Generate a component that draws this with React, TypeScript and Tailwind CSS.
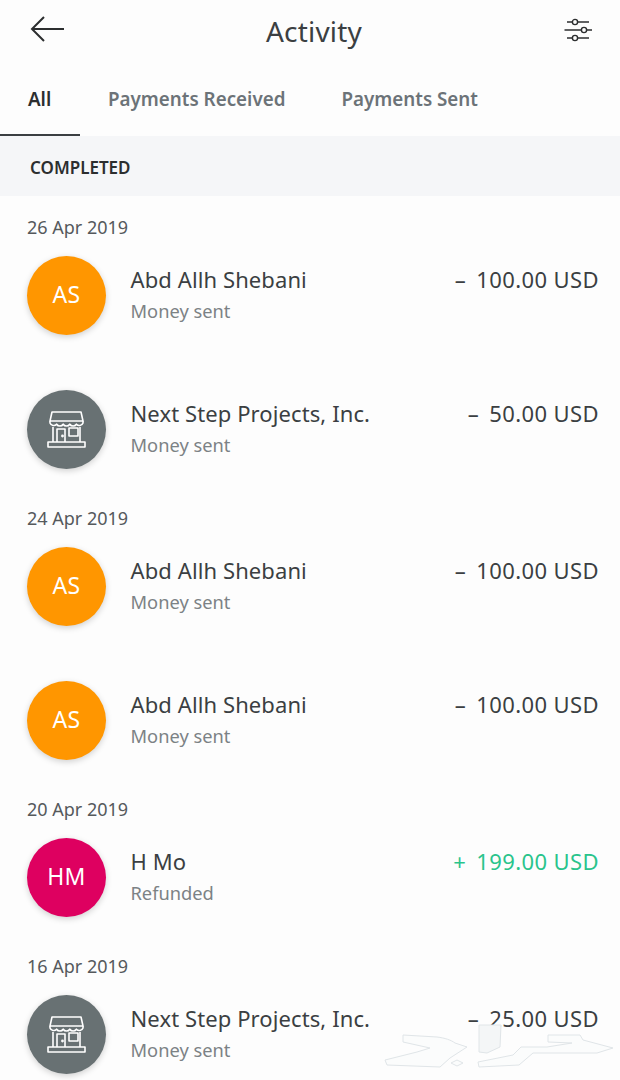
import React from 'react';

interface Payment {
  name: string;
  note: string;
  amount: string;
  avatar: 'AS' | 'HM' | 'store';
}

interface Day {
  date: string;
  items: Payment[];
}

const abd: Payment = { name: 'Abd Allh Shebani', note: 'Money sent', amount: '100.00 USD', avatar: 'AS' };

const days: Day[] = [
  {
    date: '26 Apr 2019',
    items: [abd, { name: 'Next Step Projects, Inc.', note: 'Money sent', amount: '50.00 USD', avatar: 'store' }],
  },
  { date: '24 Apr 2019', items: [abd, abd] },
  { date: '20 Apr 2019', items: [{ name: 'H Mo', note: 'Refunded', amount: '199.00 USD', avatar: 'HM' }] },
  {
    date: '16 Apr 2019',
    items: [{ name: 'Next Step Projects, Inc.', note: 'Money sent', amount: '25.00 USD', avatar: 'store' }],
  },
];

const StoreIcon = () => (
  <svg width="79" height="79" viewBox="0 0 79 79" fill="none" stroke="white" strokeWidth="1.6" strokeLinejoin="round">
    <path d="M25 22h29l2 9H23z" />
    <path d="M23 31v2a3.9 3.9 0 0 0 6.6 1.2a3.9 3.9 0 0 0 6.6 0a3.9 3.9 0 0 0 6.6 0a3.9 3.9 0 0 0 6.6 0a3.9 3.9 0 0 0 6.6 -1.2v-2" />
    <path d="M26 37v15M53 37v15" />
    <rect x="21" y="52" width="37" height="5" />
    <path d="M30 52V39h8v13" />
    <rect x="42" y="38" width="9" height="8" />
    <circle cx="35.5" cy="46" r="0.6" fill="white" />
  </svg>
);

const Avatar = ({ kind }: { kind: Payment['avatar'] }) => {
  if (kind === 'store') {
    return (
      <div className="w-[79px] h-[79px] shrink-0 rounded-full bg-[#687173] shadow-[0_2px_6px_rgba(0,0,0,0.18)]">
        <StoreIcon />
      </div>
    );
  }
  return (
    <div
      className={`w-[79px] h-[79px] shrink-0 rounded-full flex items-center justify-center pb-[2px] text-white text-[23px] tracking-[0.4px] shadow-[0_2px_6px_rgba(0,0,0,0.18)] ${
        kind === 'AS' ? 'bg-[#ff9600]' : 'bg-[#de0060]'
      }`}
    >
      {kind}
    </div>
  );
};

const Row = ({ item }: { item: Payment }) => {
  const refund = item.avatar === 'HM';
  return (
    <div className="flex items-start h-[79px]">
      <Avatar kind={item.avatar} />
      <div className="ml-[24.5px] flex-1 pt-[7px]">
        <div className="text-[22px] leading-[32px] tracking-[0.1px] text-[#3b3f42]">{item.name}</div>
        <div className="text-[18.3px] leading-[32px] text-[#7c8285]">{item.note}</div>
      </div>
      <div className={`pt-[7px] text-[22px] leading-[32px] tracking-[0.4px] ${refund ? 'text-[#2ac48c]' : 'text-[#3b3f42]'}`}>
        <span className="mr-[10px]">{refund ? '+' : '–'}</span>
        {item.amount}
      </div>
    </div>
  );
};

const Watermark = () => (
  <svg
    className="absolute left-[380px] top-[1020px]"
    width="240"
    height="60"
    viewBox="0 0 240 60"
    fill="#fbfcfc"
    stroke="#e0e5e8"
    strokeWidth="1"
  >
    <path d="M23 15l34 2c8 1 14 3 18 6l12 4-17 11-10 9-53-2-2-5 32-8 13-4-27-6z" />
    <path d="M99 5h22l-1 22-13 6-8-1z" fill="#f4f6f7" />
    <path d="M168 15h32l3 5 30 8-16 5-64 0-14 12-40 2-1-5 35-7 8-8h26l25-4-24-1z" />
    <path d="M71 43l6-3 6 3-6 3z" />
  </svg>
);

export default function App() {
  return (
    <div className="relative w-[620px] h-[1080px] overflow-hidden bg-[#fdfdfd] font-['Noto_Sans',sans-serif]">
      {/* Header */}
      <div className="h-[62px] flex items-center justify-between pl-[30px] pr-[28px]">
        <svg width="34" height="28" viewBox="0 0 34 28" fill="none" stroke="#2c2e2f" strokeWidth="2" className="-mt-[5px]">
          <path d="M14 2L2 14l12 12M2 14h32" />
        </svg>
        <div className="text-[28px] tracking-[0.2px] -mt-[1px] text-[#3b3f42]">Activity</div>
        <svg width="28" height="24" viewBox="0 0 28 24" fill="none" stroke="#2c2e2f" strokeWidth="1.4" className="-mt-[2px]">
          <path d="M3 4h5.5M13.5 4H25M0.5 12h17M22.5 12H28M3 20h5.5M13.5 20H25" />
          <circle cx="11" cy="4" r="2.6" />
          <circle cx="20" cy="12" r="2.6" />
          <circle cx="11" cy="20" r="2.6" />
        </svg>
      </div>

      {/* Tabs */}
      <div className="h-[74px] flex text-[18.8px] font-semibold">
        <div className="w-[80px] h-full border-b-2 border-[#3b3f42] pl-[28px] pt-[23px] text-[#2c2e2f]">All</div>
        <div className="ml-[28px] pt-[23px] text-[#6c7378]">Payments Received</div>
        <div className="ml-[56px] pt-[23px] text-[#6c7378]">Payments Sent</div>
      </div>

      <div className="h-[60px] flex items-center pl-[30px] pt-[4px] bg-[#f5f6f8] text-[17px] font-semibold text-[#2c2e2f]">
        COMPLETED
      </div>

      {/* Activity list */}
      {days.map((day) => (
        <div key={day.date} className="pr-[21px] pl-[27px] pt-[19px] pb-[18px]">
          <div className="h-[24px] leading-[24px] text-[18px] text-[#55595c]">{day.date}</div>
          <div className="mt-[17px] flex flex-col gap-[55px]">
            {day.items.map((item, i) => (
              <Row key={i} item={item} />
            ))}
          </div>
        </div>
      ))}

      <Watermark />
    </div>
  );
}
